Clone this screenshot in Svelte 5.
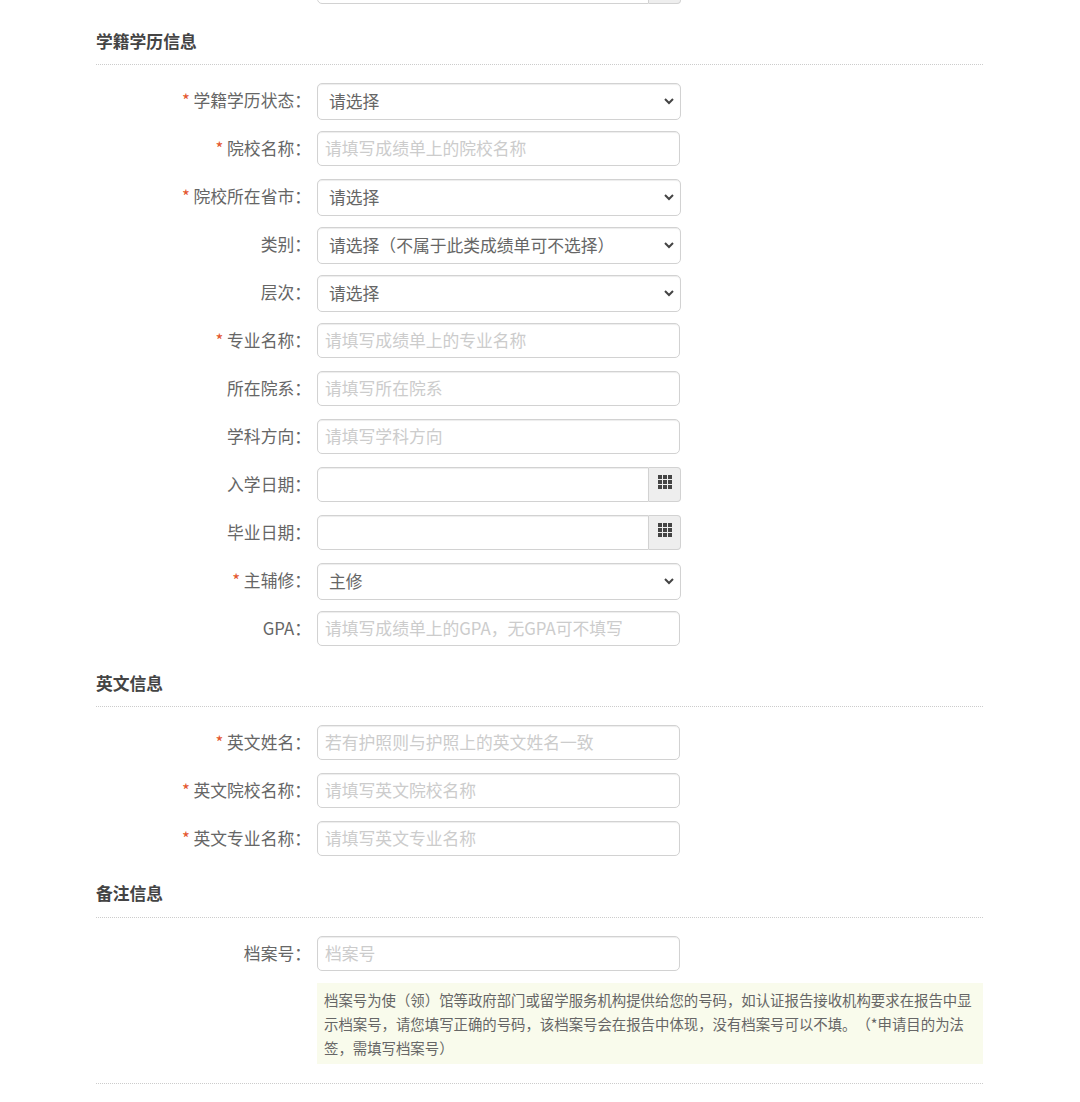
<script>
  const sections = [
    {
      title: "学籍学历信息",
      rows: [
        { label: "学籍学历状态", req: true, type: "select", value: "请选择" },
        { label: "院校名称", req: true, type: "input", hint: "请填写成绩单上的院校名称" },
        { label: "院校所在省市", req: true, type: "select", value: "请选择" },
        { label: "类别", type: "select", value: "请选择（不属于此类成绩单可不选择）" },
        { label: "层次", type: "select", value: "请选择" },
        { label: "专业名称", req: true, type: "input", hint: "请填写成绩单上的专业名称" },
        { label: "所在院系", type: "input", hint: "请填写所在院系" },
        { label: "学科方向", type: "input", hint: "请填写学科方向" },
        { label: "入学日期", type: "date" },
        { label: "毕业日期", type: "date" },
        { label: "主辅修", req: true, type: "select", value: "主修" },
        { label: "GPA", type: "input", hint: "请填写成绩单上的GPA，无GPA可不填写" }
      ]
    },
    {
      title: "英文信息",
      rows: [
        { label: "英文姓名", req: true, type: "input", hint: "若有护照则与护照上的英文姓名一致" },
        { label: "英文院校名称", req: true, type: "input", hint: "请填写英文院校名称" },
        { label: "英文专业名称", req: true, type: "input", hint: "请填写英文专业名称" }
      ]
    },
    {
      title: "备注信息",
      rows: [{ label: "档案号", type: "input", hint: "档案号" }]
    }
  ]
</script>

<div class="page">
  <div class="row">
    <div class="label"></div>
    <div class="date">
      <input type="text" />
      <span class="addon"></span>
    </div>
  </div>

  {#each sections as section}
    <section>
      <h3>{section.title}</h3>
      {#each section.rows as row}
        <div class="row">
          <div class="label">
            {#if row.req}<i>*</i>{/if}
            {row.label}：
          </div>
          {#if row.type === "select"}
            <div class="select">
              <select>
                <option>{row.value}</option>
              </select>
              <svg class="chevron" width="10" height="7" viewBox="0 0 10 7" fill="none" stroke="#444" stroke-width="2">
                <path d="M1 1l4 4 4-4" />
              </svg>
            </div>
          {:else if row.type === "date"}
            <div class="date">
              <input type="text" />
              <span class="addon">
                <svg width="14" height="14" viewBox="0 0 14 14" fill="#444">
                  <rect x="0" y="0" width="4" height="4" />
                  <rect x="5" y="0" width="4" height="4" />
                  <rect x="10" y="0" width="4" height="4" />
                  <rect x="0" y="5" width="4" height="4" />
                  <rect x="5" y="5" width="4" height="4" />
                  <rect x="10" y="5" width="4" height="4" />
                  <rect x="0" y="10" width="4" height="4" />
                  <rect x="5" y="10" width="4" height="4" />
                  <rect x="10" y="10" width="4" height="4" />
                </svg>
              </span>
            </div>
          {:else}
            <input class="text" type="text" placeholder={row.hint} />
          {/if}
        </div>
      {/each}
    </section>
  {/each}

  <div class="note-row">
    <p class="note">
      档案号为使（领）馆等政府部门或留学服务机构提供给您的号码，如认证报告接收机构要求在报告中显示档案号，请您填写正确的号码，该档案号会在报告中体现，没有档案号可以不填。（*申请目的为法签，需填写档案号）
    </p>
  </div>
  <div class="end-line"></div>
</div>

<style>
  :global(body) {
    margin: 0;
    background: #fff;
  }

  .page {
    width: 887px;
    margin: -31px 0 0 96px;
    font-family: "Noto Sans CJK SC", "Liberation Sans", sans-serif;
    font-size: 16.8px;
    color: #666;
    text-spacing-trim: space-all;
  }

  section {
    padding-top: 12px;
  }

  section:first-of-type {
    margin-top: 1px;
  }

  h3 {
    margin: 0 0 18px;
    padding-bottom: 10px;
    font-size: 16.8px;
    line-height: 25px;
    font-weight: 700;
    color: #444;
    border-bottom: 1px dotted #ccc;
  }

  section:last-of-type h3 {
    padding-bottom: 11px;
  }

  .row {
    display: flex;
    align-items: flex-start;
    height: 36px;
    margin-bottom: 12px;
  }

  .label {
    flex: none;
    width: 215px;
    margin-right: 6px;
    text-align: right;
    line-height: 35px;
    white-space: nowrap;
  }

  .label i {
    font-style: normal;
    color: #e4572e;
  }

  select,
  input {
    box-sizing: border-box;
    font: inherit;
    text-spacing-trim: space-all;
    background: #fff;
    border: 1px solid #d2d2d2;
    border-radius: 5px;
    box-shadow: inset 0 1px 1px rgba(0, 0, 0, 0.075);
    outline: none;
  }

  .select {
    position: relative;
    flex: none;
    width: 364px;
    height: 37px;
  }

  select {
    appearance: none;
    width: 100%;
    height: 100%;
    padding: 0 11px 2px;
    color: #666;
  }

  .chevron {
    position: absolute;
    right: 7px;
    top: 15px;
    pointer-events: none;
  }

  .text {
    width: 363px;
    height: 35px;
    padding: 0 7px 1px;
  }

  .text::placeholder {
    color: #ccc;
    opacity: 1;
  }

  .date {
    display: flex;
    width: 364px;
    height: 35px;
  }

  .date input {
    flex: 1;
    min-width: 0;
    border-radius: 5px 0 0 5px;
  }

  .addon {
    box-sizing: border-box;
    flex: none;
    display: flex;
    justify-content: center;
    padding-top: 7px;
    width: 32px;
    background: #eee;
    border: 1px solid #d2d2d2;
    border-left: none;
    border-radius: 0 4px 4px 0;
  }

  .note-row {
    padding-left: 221px;
  }

  .note {
    margin: -1px 0 0;
    padding: 5px 7px 4px;
    background: #f9fbec;
    font-size: 14.4px;
    line-height: 24px;
    color: #666;
  }

  .end-line {
    margin-top: 19px;
    border-top: 1px dotted #ccc;
  }
</style>
